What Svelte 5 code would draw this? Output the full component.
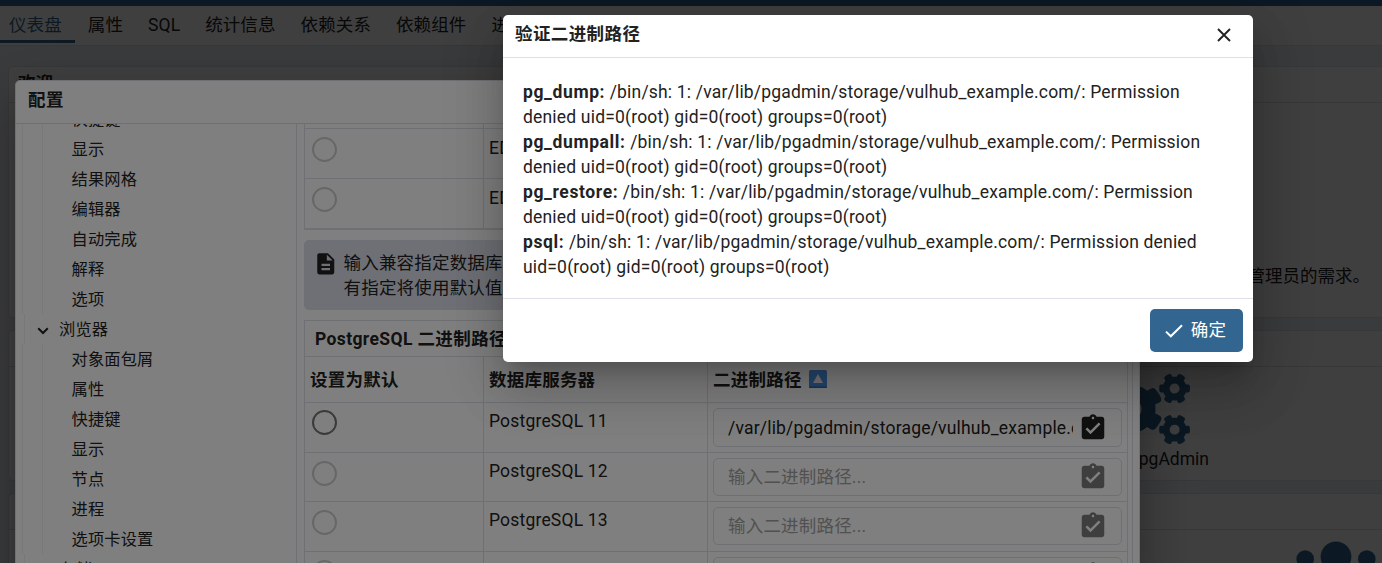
<script>
  const tabs = ['仪表盘', '属性', 'SQL', '统计信息', '依赖关系', '依赖组件', '进程'];
  const treeTop = ['快捷键', '显示', '结果网格', '编辑器', '自动完成', '解释', '选项'];
  const treeBrowser = ['对象面包屑', '属性', '快捷键', '显示', '节点', '进程', '选项卡设置'];
  const servers = [
    { name: 'PostgreSQL 11', path: '/var/lib/pgadmin/storage/vulhub_example.com/', h: 50 },
    { name: 'PostgreSQL 12', path: '', h: 49 },
    { name: 'PostgreSQL 13', path: '', h: 50 },
    { name: 'PostgreSQL 14', path: '', h: 50 }
  ];
  const tail = '/bin/sh: 1: /var/lib/pgadmin/storage/vulhub_example.com/: Permission denied uid=0(root) gid=0(root) groups=0(root)';
  const results = ['pg_dump', 'pg_dumpall', 'pg_restore', 'psql'];
  const smallGear = 'M512.1 191l-8.2 14.3c-3 5.3-9.4 7.5-15.1 5.4-11.8-4.4-22.6-10.7-32.1-18.6-4.6-3.8-5.8-10.5-2.8-15.7l8.2-14.3c-6.9-8-12.3-17.3-15.9-27.4h-16.5c-6 0-11.2-4.3-12.2-10.3-2-12-2.1-24.6 0-37.1 1-6 6.2-10.4 12.2-10.4h16.5c3.6-10.1 9-19.4 15.9-27.4l-8.2-14.3c-3-5.2-1.9-11.9 2.8-15.7 9.5-7.9 20.4-14.2 32.1-18.6 5.7-2.1 12.1.1 15.1 5.4l8.2 14.3c10.5-1.9 21.2-1.9 31.7 0L552 6.3c3-5.3 9.4-7.5 15.1-5.4 11.8 4.4 22.6 10.7 32.1 18.6 4.6 3.8 5.8 10.5 2.8 15.7l-8.2 14.3c6.9 8 12.3 17.3 15.9 27.4h16.5c6 0 11.2 4.3 12.2 10.3 2 12 2.1 24.6 0 37.1-1 6-6.2 10.4-12.2 10.4h-16.5c-3.6 10.1-9 19.4-15.9 27.4l8.2 14.3c3 5.2 1.9 11.9-2.8 15.7-9.5 7.9-20.4 14.2-32.1 18.6-5.7 2.1-12.1-.1-15.1-5.4l-8.2-14.3c-10.4 1.9-21.2 1.9-31.7 0zm-10.5-58.8c38.5 29.6 82.4-14.3 52.8-52.8-38.5-29.7-82.4 14.3-52.8 52.8z';
  const bigGear = 'M386.3 286.1l33.7 16.8c10.1 5.8 14.5 18.1 10.5 29.1-8.9 24.2-26.4 46.4-42.6 65.8-7.4 8.9-20.2 11.1-30.3 5.3l-29.1-16.8c-16 13.7-34.6 24.6-54.9 31.7v33.6c0 11.6-8.3 21.6-19.7 23.6-24.6 4.2-50.4 4.4-75.9 0-11.5-2-20-11.9-20-23.6V418c-20.3-7.2-38.9-18-54.9-31.7L74 403c-10 5.8-22.9 3.6-30.3-5.3-16.2-19.4-33.3-41.6-42.2-65.7-4-10.9.4-23.2 10.5-29.1l33.3-16.8c-3.9-20.9-3.9-42.4 0-63.4L12 205.8c-10.1-5.8-14.6-18.1-10.5-29 8.9-24.2 26-46.4 42.2-65.8 7.4-8.9 20.2-11.1 30.3-5.3l29.1 16.8c16-13.7 34.6-24.6 54.9-31.7V57.1c0-11.5 8.2-21.5 19.6-23.5 24.6-4.2 50.5-4.4 76-.1 11.5 2 20 11.9 20 23.6v33.6c20.3 7.2 38.9 18 54.9 31.7l29.1-16.8c10-5.8 22.9-3.6 30.3 5.3 16.2 19.4 33.2 41.6 42.1 65.8 4 10.9.1 23.2-10 29.1l-33.7 16.8c3.9 21 3.9 42.5 0 63.5zm-117.6 21.1c59.2-77-28.7-164.9-105.7-105.7-59.2 77 28.7 164.9 105.7 105.7z';
</script>

<div class="page">
  <div class="topbar"></div>
  <nav class="tabs">
    {#each tabs as t, i}
      <span class="tab" class:active={i === 0}>{t}</span>
    {/each}
  </nav>
  <main class="dash">
    <section class="panel welcome">
      <h2>欢迎</h2>
      <p>管理员的需求。</p>
    </section>
    <section class="panel links">
      <h2></h2>
      <div class="cog">
        <svg viewBox="0 0 640 512" width="88" height="70.4" fill="#326690">
          <path d={bigGear} />
          <path d={smallGear} />
          <path d={smallGear} transform="translate(0 298.9)" />
        </svg>
        <span>配置 pgAdmin</span>
      </div>
    </section>
    <section class="panel start">
      <h2></h2>
      <svg class="users" viewBox="0 0 640 512" width="88" height="70.4" fill="#326690">
        <circle cx="96" cy="160" r="64" />
        <circle cx="544" cy="160" r="64" />
        <circle cx="320" cy="144" r="112" />
        <path d="M397 288h-8c-42 20-96 20-138 0h-8c-64 0-115 52-115 115v29c0 26 22 48 48 48h288c26 0 48-22 48-48v-29c0-63-52-115-115-115z" />
      </svg>
    </section>
  </main>
</div>

<div class="backdrop"></div>

<div class="dialog prefs">
  <header>配置</header>
  <div class="prefs-body">
    <aside>
      <div class="group first">
        {#each treeTop as t}<div class="leaf">{t}</div>{/each}
      </div>
      <div class="branch">
        <svg width="12" height="8" viewBox="0 0 12 8"><path d="M1.2 1.3L6 6l4.800-4.700" fill="none" stroke="#222" stroke-width="2" /></svg>
        <span>浏览器</span>
      </div>
      <div class="group">
        {#each treeBrowser as t}<div class="leaf">{t}</div>{/each}
      </div>
      <div class="branch last"><span>存储</span></div>
    </aside>
    <div class="content">
      <div class="table edb">
        {#each [0, 1, 2] as n}
          <div class="row" class:stub={n === 0}>
            <div class="cell radio"><i class="off"></i></div>
            <div class="cell">{n ? 'EDB Advanced Server' : ''}</div>
            <div class="cell"></div>
          </div>
        {/each}
      </div>
      <div class="note">
        <svg viewBox="0 0 24 24" width="25.500" height="25.500" fill="#222"><path d="M14 2H6c-1.100 0-1.990.9-1.990 2L4 20c0 1.100.89 2 1.990 2H18c1.100 0 2-.9 2-2V8l-6-6zm2 16H8v-2h8v2zm0-4H8v-2h8v2zm-3-5V3.500L18.500 9H13z" /></svg>
        <div>输入兼容指定数据库<br />有指定将使用默认值</div>
      </div>
      <div class="table pg">
        <div class="caption">PostgreSQL 二进制路径</div>
        <div class="row head">
          <div class="cell">设置为默认</div>
          <div class="cell">数据库服务器</div>
          <div class="cell">二进制路径
            <svg width="18" height="18" viewBox="0 0 18 18">
              <rect width="18" height="18" rx="1.500" fill="#4a90dc" />
              <rect y="16.500" width="18" height="1.500" rx=".7" fill="#2f6cbd" />
              <path d="M9 4l5 9H4z" fill="#efe9f5" />
            </svg>
          </div>
        </div>
        {#each servers as s}
          <div class="row" style="height:{s.h}px">
            <div class="cell radio"><i class:off={!s.path}></i></div>
            <div class="cell">{s.name}</div>
            <div class="cell path">
              <div class="input" class:off={!s.path}>
                <span>{s.path || '输入二进制路径...'}</span>
                <svg viewBox="0 0 24 24" width="30" height="30"><path d="M19 3h-4.180C14.400 1.840 13.300 1 12 1c-1.300 0-2.400.84-2.820 2H5c-1.100 0-2 .9-2 2v14c0 1.100.9 2 2 2h14c1.100 0 2-.9 2-2V5c0-1.100-.9-2-2-2zm-7 0c.55 0 1 .45 1 1s-.45 1-1 1-1-.45-1-1 .45-1 1-1zm-2 14l-4-4 1.410-1.410L10 14.170l6.590-6.590L18 9l-8 8z" /></svg>
              </div>
            </div>
          </div>
        {/each}
      </div>
    </div>
  </div>
</div>

<div class="backdrop"></div>

<div class="dialog result">
  <header>
    <span>验证二进制路径</span>
    <svg width="14" height="14" viewBox="0 0 14 14"><path d="M1 1l12 12M13 1L1 13" stroke="#222" stroke-width="1.900" /></svg>
  </header>
  <div class="result-body">
    {#each results as r}
      <div><b>{r}:</b> {tail}</div>
    {/each}
  </div>
  <footer>
    <button>
      <svg width="18" height="14" viewBox="0 0 18 14"><path d="M1 7.600l4.800 4.700L17 1.200" fill="none" stroke="#fff" stroke-width="2" /></svg>
      确定
    </button>
  </footer>
</div>

<style>
  :global(body) {
    overflow: hidden;
    font-family: Roboto, 'Noto Sans CJK SC', sans-serif;
    font-size: 17.5px;
    line-height: 25px;
    color: #222;
  }
  :global(#app) { position: relative; width: 1382px; height: 563px; overflow: hidden; }
  :global(#app *) { box-sizing: border-box; }
  .page { height: 563px; background: #ebeef3; display: flex; flex-direction: column; overflow: hidden; }
  .topbar { height: 6px; flex: none; background: #326690; }
  .tabs { height: 40px; flex: none; display: flex; background: #fff; border-bottom: 1px solid #dde0e6; margin-left: -4px; letter-spacing: 0.1px; }
  .tab { height: 37px; padding: 7px 12px 0 13px; white-space: nowrap; }
  .tab.active { color: #326690; border-bottom: 3px solid #326690; padding-right: 13px; }
  .dash { padding: 20px 0 0 8px; display: flex; flex-direction: column; gap: 11.5px; }
  .panel { flex: none; width: 1400px; background: #fff; border: 1px solid #dde0e6; border-radius: 5px; }
  .panel h2 { margin: 0; height: 36px; padding: 4px 9px; font-size: 17.5px; border-bottom: 1px solid #dde0e6; }
  .welcome { height: 252px; }
  .welcome p { margin: 161px 0 0; width: 1361px; text-align: right; }
  .links { height: 151.5px; }
  .cog { width: 140px; margin: 7px 0 0 1067px; display: flex; flex-direction: column; align-items: center; }
  .cog span { width: 140px; text-align: right; padding-right: 7px; white-space: nowrap; line-height: 30px; }
  .start { height: 160px; }
  .users { display: block; margin: 7px 0 0 1283px; }

  .backdrop { position: absolute; inset: 0; background: rgba(0, 0, 0, 0.5); }
  .dialog {
    position: absolute;
    background: #fff;
    border-radius: 5px;
    overflow: hidden;
    box-shadow: 0 14px 19px -9px rgba(0, 0, 0, 0.2), 0 30px 48px 4px rgba(0, 0, 0, 0.14), 0 11px 58px 10px rgba(0, 0, 0, 0.12);
  }
  .dialog header { font-weight: 700; letter-spacing: .4px; border-bottom: 1px solid #dde0e6; display: flex; justify-content: space-between; }

  .prefs { left: 15px; top: 80px; width: 1125px; height: 520px; border: 1px solid #dde0e6; }
  .prefs header { height: 43px; padding: 7px 12px; }
  .prefs-body { display: flex; height: 480px; }
  aside { width: 281px; border-right: 1px solid #dde0e6; font-size: 16.25px; overflow: hidden; }
  .group { margin-left: 6px; border-left: 1px solid #f0f0f3; background: linear-gradient(#f0f0f3, #f0f0f3) 19px 0 / 1px 100% no-repeat; }
  .group.first { margin-top: -20px; }
  .leaf { height: 30px; line-height: 30px; padding: 1px 0 0 48.5px; letter-spacing: .15px; }
  .branch { height: 30px; margin-left: 8px; border-left: 1px solid #f0f0f3; display: flex; align-items: center; gap: 10px; padding-left: 12px; }
  .branch svg { margin-top: 3px; }
  .branch span { letter-spacing: .15px; }
  .branch.last { padding-left: 34px; }
  .content { width: 836px; padding-left: 7px; padding-right: 4px; border-right: 1px solid #dde0e6; overflow: hidden; }
  .table { border-left: 1px solid #dde0e6; border-right: 1px solid #dde0e6; }
  .row { display: grid; grid-template-columns: 179px 224px 1fr; border-bottom: 1px solid #dde0e6; height: 50px; }
  .row.stub { height: 5px; overflow: hidden; }
  .edb { border-bottom: 2px solid #dde0e6; height: 106px; }
  .edb .row:last-child { border-bottom: 0; }
  .edb .cell { padding-top: 7px; }
  .cell { padding: 6px 5px; border-right: 1px solid #dde0e6; white-space: nowrap; overflow: hidden; letter-spacing: .19px; }
  .cell:last-child { border-right: 0; }
  .radio { padding: 7px 7px; }
  .radio i { display: block; width: 25px; height: 25px; border: 2px solid #757575; border-radius: 50%; }
  .radio i.off { border-color: #cfcfcf; margin: 1px 0 0 0; }
  .note { height: 70px; margin: 10px 0; padding: 11px 9px 9px; border-radius: 5px; background: #dde0eb; display: flex; gap: 5px; white-space: nowrap; }
  .note div { letter-spacing: .19px; }
  .pg { border-top: 1px solid #dde0e6; }
  .caption { height: 36px; padding: 6px 10px; font-weight: 700; letter-spacing: .38px; border-bottom: 1px solid #dde0e6; }
  .row.head { height: 46px; font-weight: 700; }
  .head .cell { padding: 11px 5px; letter-spacing: .22px; }
  .head svg { vertical-align: -2px; margin-left: 3px; }
  .path { padding: 5px; }
  .input { height: 39px; border: 1px solid #dde0e6; border-radius: 5px; padding: 0 13px 0 14px; display: flex; align-items: center; justify-content: space-between; }
  .input.off { height: 38px; }
  .input span { width: 345px; padding-top: 1px; overflow: hidden; letter-spacing: .19px; }
  .input svg { flex: none; fill: #222; }
  .input.off span { color: #a3a3a3; }
  .input.off svg { fill: #7d7d7d; }

  .result { left: 503px; top: 15px; width: 750px; height: 347px; display: flex; flex-direction: column; }
  .result header { height: 43px; flex: none; padding: 7px 22px 0 12px; }
  .result header svg { margin-top: 6px; }
  .result-body { flex: 1; padding: 22px 20px 0; }
  .result-body div { letter-spacing: .187px; }
  .result-body b { letter-spacing: .62px; }
  footer { height: 64px; flex: none; border-top: 1px solid #dde0e6; padding: 10px; display: flex; justify-content: flex-end; }
  button { width: 93px; height: 43px; border: 0; border-radius: 5px; background: #326690; color: #fff; font: inherit; letter-spacing: .2px; display: flex; align-items: center; justify-content: center; gap: 8px; padding: 0 2px 0 0; white-space: nowrap; }
</style>
